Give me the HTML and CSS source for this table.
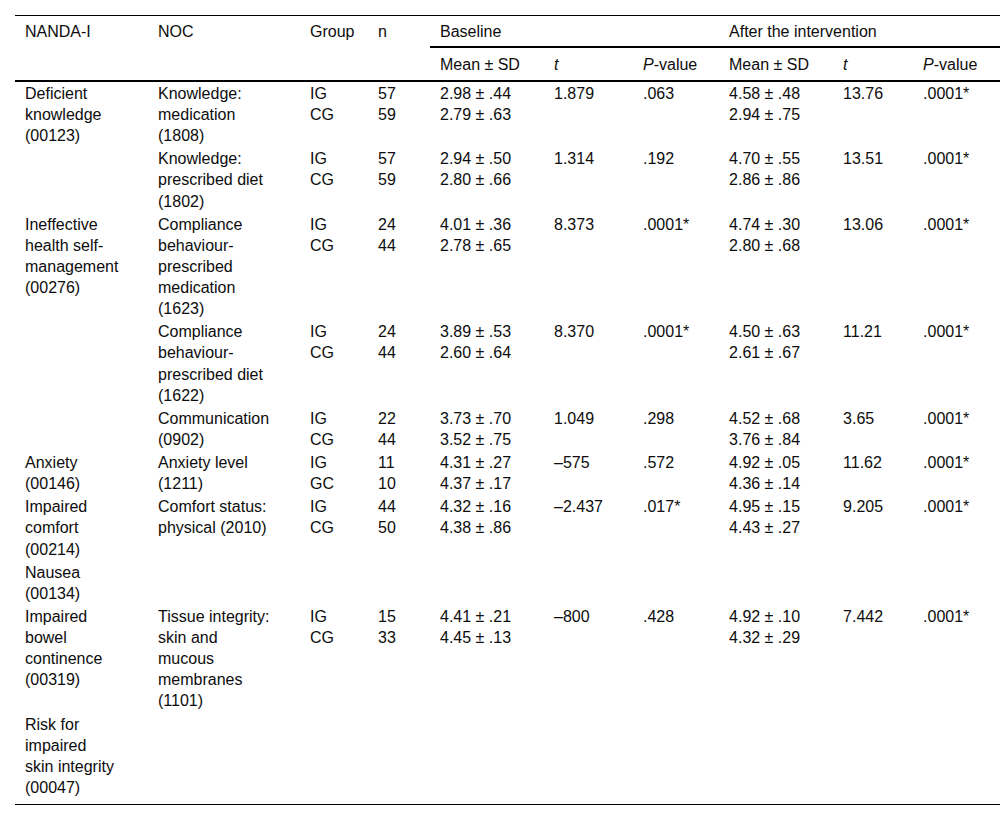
FILE: index.html
```html
<!DOCTYPE html>
<html lang="en">
<head>
<meta charset="utf-8">
<title>NANDA-I / NOC outcomes</title>
<link rel="stylesheet" href="styles.css">
</head>
<body>
<div class="page">
<table class="results">
  <colgroup>
    <col class="w-nanda">
    <col class="w-noc">
    <col class="w-group">
    <col class="w-n">
    <col class="w-mean">
    <col class="w-t">
    <col class="w-p">
    <col class="w-mean">
    <col class="w-t2">
    <col class="w-p2">
  </colgroup>
  <thead>
    <tr class="head-1">
      <th rowspan="2" class="span2 nanda">NANDA-I</th>
      <th rowspan="2" class="span2 noc">NOC</th>
      <th rowspan="2" class="span2">Group</th>
      <th rowspan="2" class="span2">n</th>
      <th colspan="3" class="group-head">Baseline</th>
      <th colspan="3" class="group-head">After the intervention</th>
    </tr>
    <tr class="head-2">
      <th>Mean ± SD</th>
      <th><i>t</i></th>
      <th><i>P</i>-value</th>
      <th>Mean ± SD</th>
      <th><i>t</i></th>
      <th><i>P</i>-value</th>
    </tr>
  </thead>
  <tbody>
    <tr>
      <td class="nanda">Deficient knowledge (00123)</td>
      <td class="noc">Knowledge: medication (1808)</td>
      <td>IG<br>CG</td>
      <td>57<br>59</td>
      <td>2.98 ± .44<br>2.79 ± .63</td>
      <td>1.879</td>
      <td>.063</td>
      <td>4.58 ± .48<br>2.94 ± .75</td>
      <td>13.76</td>
      <td>.0001*</td>
    </tr>
    <tr>
      <td class="nanda"></td>
      <td class="noc">Knowledge: prescribed diet (1802)</td>
      <td>IG<br>CG</td>
      <td>57<br>59</td>
      <td>2.94 ± .50<br>2.80 ± .66</td>
      <td>1.314</td>
      <td>.192</td>
      <td>4.70 ± .55<br>2.86 ± .86</td>
      <td>13.51</td>
      <td>.0001*</td>
    </tr>
    <tr>
      <td class="nanda">Ineffective health self-management (00276)</td>
      <td class="noc">Compliance behaviour-prescribed medication (1623)</td>
      <td>IG<br>CG</td>
      <td>24<br>44</td>
      <td>4.01 ± .36<br>2.78 ± .65</td>
      <td>8.373</td>
      <td>.0001*</td>
      <td>4.74 ± .30<br>2.80 ± .68</td>
      <td>13.06</td>
      <td>.0001*</td>
    </tr>
    <tr>
      <td class="nanda"></td>
      <td class="noc">Compliance behaviour-prescribed diet (1622)</td>
      <td>IG<br>CG</td>
      <td>24<br>44</td>
      <td>3.89 ± .53<br>2.60 ± .64</td>
      <td>8.370</td>
      <td>.0001*</td>
      <td>4.50 ± .63<br>2.61 ± .67</td>
      <td>11.21</td>
      <td>.0001*</td>
    </tr>
    <tr>
      <td class="nanda"></td>
      <td class="noc">Communication (0902)</td>
      <td>IG<br>CG</td>
      <td>22<br>44</td>
      <td>3.73 ± .70<br>3.52 ± .75</td>
      <td>1.049</td>
      <td>.298</td>
      <td>4.52 ± .68<br>3.76 ± .84</td>
      <td>3.65</td>
      <td>.0001*</td>
    </tr>
    <tr>
      <td class="nanda">Anxiety (00146)</td>
      <td class="noc">Anxiety level (1211)</td>
      <td>IG<br>GC</td>
      <td>11<br>10</td>
      <td>4.31 ± .27<br>4.37 ± .17</td>
      <td>–575</td>
      <td>.572</td>
      <td>4.92 ± .05<br>4.36 ± .14</td>
      <td>11.62</td>
      <td>.0001*</td>
    </tr>
    <tr>
      <td class="nanda">Impaired comfort (00214)</td>
      <td class="noc">Comfort status: physical (2010)</td>
      <td>IG<br>CG</td>
      <td>44<br>50</td>
      <td>4.32 ± .16<br>4.38 ± .86</td>
      <td>–2.437</td>
      <td>.017*</td>
      <td>4.95 ± .15<br>4.43 ± .27</td>
      <td>9.205</td>
      <td>.0001*</td>
    </tr>
    <tr>
      <td class="nanda">Nausea (00134)</td>
      <td class="noc"></td>
      <td></td>
      <td></td>
      <td></td>
      <td></td>
      <td></td>
      <td></td>
      <td></td>
      <td></td>
    </tr>
    <tr>
      <td class="nanda">Impaired bowel continence (00319)</td>
      <td class="noc">Tissue integrity: skin and mucous membranes (1101)</td>
      <td>IG<br>CG</td>
      <td>15<br>33</td>
      <td>4.41 ± .21<br>4.45 ± .13</td>
      <td>–800</td>
      <td>.428</td>
      <td>4.92 ± .10<br>4.32 ± .29</td>
      <td>7.442</td>
      <td>.0001*</td>
    </tr>
    <tr class="last">
      <td class="nanda">Risk for impaired skin integrity (00047)</td>
      <td class="noc"></td>
      <td></td>
      <td></td>
      <td></td>
      <td></td>
      <td></td>
      <td></td>
      <td></td>
      <td></td>
    </tr>
  </tbody>
</table>
</div>
</body>
</html>
```

FILE: styles.css
```css
html, body {
  margin: 0;
  padding: 0;
  background: #ffffff;
}

.page {
  padding: 15px 0 0 15px;
}

.results {
  width: 985px;
  table-layout: fixed;
  border-collapse: separate;
  border-spacing: 0;
  border-top: 1px solid #000;
  border-bottom: 1px solid #000;
  font-family: "Liberation Sans", Arial, Helvetica, sans-serif;
  font-size: 16px;
  line-height: 21.1px;
  color: #0d0d0d;
}

.w-nanda { width: 133px; }
.w-noc { width: 152px; }
.w-group { width: 68px; }
.w-n { width: 62px; }
.w-mean { width: 114px; }
.w-t { width: 89px; }
.w-p { width: 86px; }
.w-t2 { width: 80px; }
.w-p2 { width: 87px; }

.results th,
.results td {
  text-align: left;
  vertical-align: top;
  font-weight: normal;
  padding: 1px 6px 1.1px 10px;
  white-space: normal;
  overflow: visible;
}

.results th {
  line-height: 21px;
}

.head-1 th {
  padding-top: 5px;
  padding-bottom: 4px;
}

.head-1 th.group-head {
  border-bottom: 2px solid #000;
}

.head-1 th.span2 {
  border-bottom: 2px solid #000;
}

.head-2 th {
  padding-top: 6px;
  padding-bottom: 5px;
  border-bottom: 2px solid #000;
}

.results td.nanda,
.results th.nanda {
  padding-right: 29px;
}

.results td.noc,
.results th.noc {
  padding-right: 26px;
}

.results tr.last td {
  padding-bottom: 6px;
}

.results i {
  font-style: italic;
}
```
